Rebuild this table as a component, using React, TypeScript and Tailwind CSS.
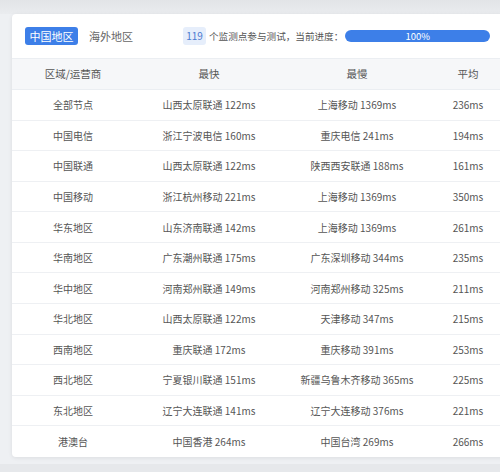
import React from "react";

const rows: [string, string, string, string][] = [
  ["全部节点", "山西太原联通 122ms", "上海移动 1369ms", "236ms"],
  ["中国电信", "浙江宁波电信 160ms", "重庆电信 241ms", "194ms"],
  ["中国联通", "山西太原联通 122ms", "陕西西安联通 188ms", "161ms"],
  ["中国移动", "浙江杭州移动 221ms", "上海移动 1369ms", "350ms"],
  ["华东地区", "山东济南联通 142ms", "上海移动 1369ms", "261ms"],
  ["华南地区", "广东潮州联通 175ms", "广东深圳移动 344ms", "235ms"],
  ["华中地区", "河南郑州联通 149ms", "河南郑州移动 325ms", "211ms"],
  ["华北地区", "山西太原联通 122ms", "天津移动 347ms", "215ms"],
  ["西南地区", "重庆联通 172ms", "重庆移动 391ms", "253ms"],
  ["西北地区", "宁夏银川联通 151ms", "新疆乌鲁木齐移动 365ms", "225ms"],
  ["东北地区", "辽宁大连联通 141ms", "辽宁大连移动 376ms", "221ms"],
  ["港澳台", "中国香港 264ms", "中国台湾 269ms", "266ms"],
];

const cols = "grid grid-cols-[122px_150px_146px_76px]";

export default function App() {
  return (
    <div
      className="w-[500px] h-[472px] overflow-hidden bg-[#eef0f3] relative"
      style={{ fontFamily: '"Noto Sans CJK SC", "Noto Sans", sans-serif' }}
    >
      <div className="h-[14px] bg-gradient-to-b from-[#e2e4e7] to-[#eaecef]" />
      <div className="pl-[12px]">
        <div className="w-[494px] bg-white rounded-[4px] shadow-[0_1px_4px_rgba(0,0,0,0.08)] overflow-hidden">
          <div className="h-[44px] flex items-center pl-[13px]">
            <div className="h-[18px] w-[53px] rounded-[3px] bg-[#3d7fe8] text-white text-[11px] leading-[18px] text-center">
              中国地区
            </div>
            <div className="ml-[11px] text-[11px] text-[#666] leading-[18px]">海外地区</div>
            <div className="ml-[50px] h-[18px] w-[23px] rounded-[3px] bg-[#e6eefb] text-[#4b7bd0] text-[10px] leading-[18px] text-center">
              119
            </div>
            <div className="ml-[3px] text-[9.6px] text-[#555] leading-[18px]">个监测点参与测试，当前进度：</div>
            <div className="ml-[2px] h-[12px] w-[145px] rounded-full bg-[#3d7fe8] text-white text-[9.5px] leading-[12px] text-center">
              100%
            </div>
          </div>
          <div className={`${cols} h-[32px] items-center bg-[#f6f7f9] border-t border-b border-[#ebeef2] text-[10.5px] text-[#555]`}>
            <div className="text-center">区域/运营商</div>
            <div className="text-center">最快</div>
            <div className="text-center">最慢</div>
            <div className="text-center">平均</div>
          </div>
          {rows.map((r, i) => (
            <div
              key={i}
              className={`${cols} h-[30.58px] items-center text-[10px] text-[#555] ${i < rows.length - 1 ? "border-b border-[#eef0f3]" : ""}`}
            >
              {r.map((c, j) => (
                <div key={j} className="text-center">
                  {c}
                </div>
              ))}
            </div>
          ))}
        </div>
      </div>
      <div className="absolute left-0 right-0 bottom-0 h-[8px] bg-[#e6e8eb]" />
    </div>
  );
}
